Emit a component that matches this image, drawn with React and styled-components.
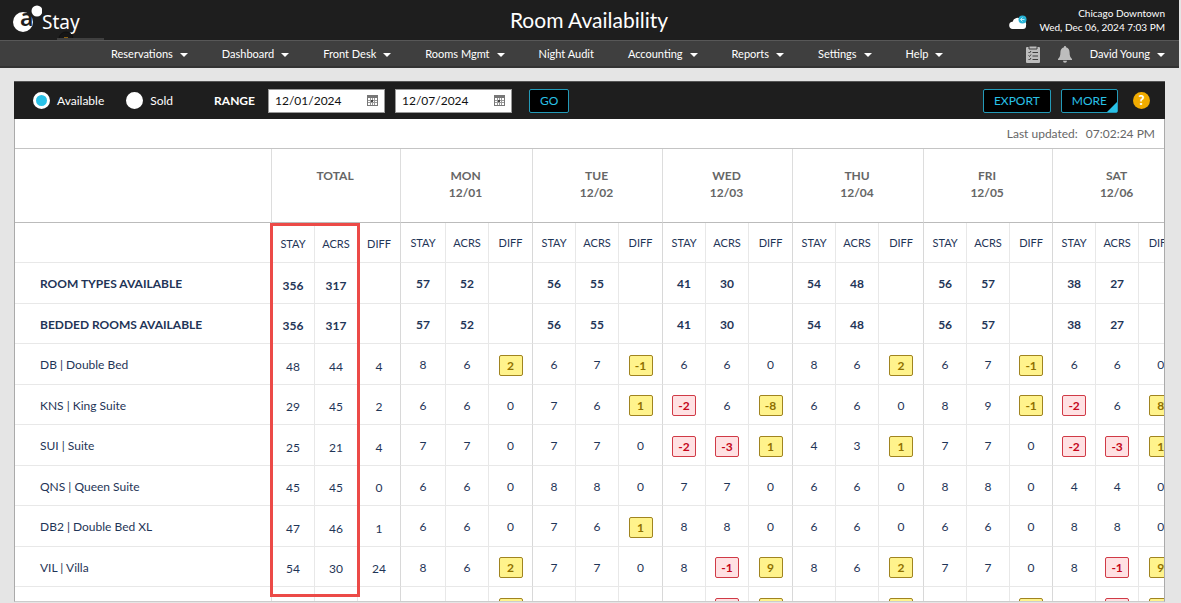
import React from "react";
import styled, { createGlobalStyle, css } from "styled-components";

const Global = createGlobalStyle`
  * { box-sizing: border-box; }
  html, body { margin: 0; background: #e5e5e5; }
  body { font-family: Lato, "Liberation Sans", sans-serif; color: #1f3557; }
  button, input { font-family: inherit; }
`;

const Page = styled.div`
  height: 100vh;
  display: flex;
  flex-direction: column;
  overflow: hidden;
`;

const TopBar = styled.header`
  flex: none;
  display: grid;
  grid-template-columns: 1fr auto 1fr;
  align-items: center;
  height: 40px;
  margin-right: 2px;
  padding: 0 14px 0 13px;
  background: #1e1e1e;
  color: #fff;
`;

const Brand = styled.a`
  position: relative;
  display: flex;
  align-items: center;
  height: 40px;
  color: #fff;
  text-decoration: none;
`;

const BrandName = styled.span`
  font-family: "Noto Sans", "Open Sans", sans-serif;
  font-size: 19px;
  line-height: 24px;
  padding-top: 4px;
`;

const BrandTab = styled.svg`
  position: absolute;
  left: 44px;
  bottom: 0;
`;

const Title = styled.h1`
  margin: 0;
  font-size: 21px;
  line-height: 24px;
  font-weight: 400;
`;

const Property = styled.div`
  display: flex;
  justify-content: flex-end;
  align-items: flex-end;
  gap: 12px;
`;

const WeatherIcon = styled.svg`
  margin-bottom: 4px;
`;

const PropertyText = styled.div`
  font-size: 10px;
  line-height: 14px;
  text-align: right;
`;

const NavBar = styled.nav`
  flex: none;
  display: flex;
  justify-content: space-between;
  align-items: center;
  height: 28px;
  margin-right: 2px;
  padding: 1px 14px 0 111px;
  background: #3f3f3f;
  border-top: 1px solid #585858;
  border-bottom: 2px solid #333;
`;

const NavGroup = styled.div`
  display: flex;
  align-items: center;
  gap: ${(p) => p.$gap}px;
`;

const NavLink = styled.a`
  display: flex;
  align-items: center;
  gap: 7px;
  font-size: 11px;
  line-height: 14px;
  color: #fff;
  text-decoration: none;
`;

const Caret = styled.span`
  margin-top: 2px;
  border: 4px solid transparent;
  border-top-color: #fff;
  border-bottom: 0;
`;

const IconButton = styled.button`
  display: flex;
  padding: 0;
  border: 0;
  background: none;
  cursor: pointer;
`;

const Panel = styled.main`
  flex: 1;
  min-height: 0;
  display: flex;
  flex-direction: column;
  margin: 13px 16px 1px 14px;
  background: #fff;
  border: 1px solid #aaa;
  border-top: 0;
  border-bottom-color: #ccc;
`;

const Toolbar = styled.form`
  flex: none;
  display: flex;
  align-items: center;
  height: 38px;
  margin: 0 -1px;
  padding: 0 15px 0 19px;
  background: #1e1e1e;
  border-top: 1px solid #555;
  color: #fff;
`;

const RadioLabel = styled.label`
  display: flex;
  align-items: center;
  gap: 7px;
  margin-right: 22px;
  font-size: 12px;
  line-height: 16px;
`;

const Radio = styled.input`
  appearance: none;
  width: 17px;
  height: 17px;
  margin: 0;
  border: 3px solid #fff;
  border-radius: 50%;
  background: #fff;
  &:checked { background: #29c1e7; }
`;

const RangeLabel = styled.span`
  margin: 0 13px 0 19px;
  font-size: 12px;
  line-height: 16px;
  font-weight: 700;
`;

const DateBox = styled.span`
  display: flex;
  align-items: center;
  width: 117px;
  height: 24px;
  margin-right: 10px;
  padding: 0 6px;
  background: #fff;
  border: 1px solid #999;
`;

const DateInput = styled.input`
  flex: 1;
  min-width: 0;
  padding: 0;
  border: 0;
  outline: 0;
  background: none;
  font-size: 12px;
  line-height: 16px;
  color: #111;
`;

const ToolButton = styled.button`
  position: relative;
  height: 24px;
  padding: 0 10px;
  background: #000;
  border: 1px solid #239ab8;
  border-radius: 2px;
  color: #29c1e7;
  font-size: 12px;
  line-height: 16px;
  cursor: pointer;
`;

const GoButton = styled(ToolButton)`
  margin-left: 7px;
`;

const Corner = styled.span`
  position: absolute;
  right: 0;
  bottom: 0;
  border: 5px solid #29c1e7;
  border-top-color: transparent;
  border-left-color: transparent;
`;

const Actions = styled.div`
  display: flex;
  align-items: center;
  gap: 10px;
  margin-left: auto;
`;

const Help = styled.button`
  width: 17px;
  height: 17px;
  margin-left: 5px;
  padding: 0;
  border: 0;
  border-radius: 50%;
  background: #f0ab00;
  color: #fff;
  font-size: 13px;
  line-height: 17px;
  font-weight: 900;
  cursor: pointer;
`;

const Updated = styled.div`
  flex: none;
  display: flex;
  justify-content: flex-end;
  gap: 8px;
  padding: 6px 9px;
  font-size: 12px;
  line-height: 17px;
  color: #666;
  border-bottom: 1px solid #c4c4c4;
`;

const Grid = styled.div`
  position: relative;
  flex: 1;
  min-height: 0;
  overflow: hidden;
`;

const Table = styled.table`
  table-layout: fixed;
  width: 1300px;
  border-collapse: separate;
  border-spacing: 0;
`;

const Col = styled.col`
  width: ${(p) => p.$w}px;
`;

const GroupHead = styled.th`
  height: 74px;
  padding: 18px 2px 0 0;
  vertical-align: top;
  font-size: 12px;
  line-height: 17px;
  font-weight: 700;
  color: #666;
  border-right: 1px solid #ddd;
  border-bottom: 1px solid #bbb;
`;

const cell = css`
  border-right: 1px solid ${(p) => (p.$last ? "#d8d8d8" : "#e8e8e8")};
  border-bottom: 1px solid #e8e8e8;
  text-align: center;
  line-height: 16px;
`;

const SubHead = styled.th`
  ${cell}
  height: 40px;
  padding: ${(p) => (p.$low ? 3 : 0)}px 0 0;
  font-size: 11px;
  font-weight: 400;
`;

const Row = styled.tr`
  height: 40px;
  font-size: 12px;
  font-weight: ${(p) => (p.$strong ? 700 : 400)};
  &:nth-child(odd) { height: 41px; }
`;

const RowHead = styled.th`
  padding: 2px 0 0 25px;
  border-right: 1px solid #ddd;
  border-bottom: 1px solid #e8e8e8;
  text-align: left;
  line-height: 16px;
  font-weight: inherit;
`;

const Cell = styled.td`
  ${cell}
  padding: ${(p) => (p.$low ? 5 : 2)}px 0 0;
`;

const Badge = styled.span`
  display: block;
  width: 24px;
  height: 21px;
  margin: 0 auto;
  border: 1px solid ${(p) => (p.$red ? "#d03a46" : "#a08420")};
  border-radius: 2px;
  background: ${(p) => (p.$red ? "#ffe1e3" : "#fff38c")};
  color: ${(p) => (p.$red ? "#c4071b" : "#8f7000")};
  line-height: 19px;
  font-weight: 700;
`;

const Highlight = styled.div`
  position: absolute;
  left: 255px;
  top: 74px;
  width: 90px;
  height: 374px;
  border: 3px solid #ec4a47;
  pointer-events: none;
`;

const MENU = [
  ["Reservations", true], ["Dashboard", true], ["Front Desk", true],
  ["Rooms Mgmt", true], ["Night Audit", false], ["Accounting", true],
  ["Reports", true], ["Settings", true], ["Help", true],
];

const GROUPS = [
  { day: "TOTAL", widths: [43, 43, 43] },
  { day: "MON", date: "12/01", widths: [45, 43, 44] },
  { day: "TUE", date: "12/02", widths: [43, 43, 44] },
  { day: "WED", date: "12/03", widths: [43, 43, 44] },
  { day: "THU", date: "12/04", widths: [43, 43, 45] },
  { day: "FRI", date: "12/05", widths: [43, 43, 43] },
  { day: "SAT", date: "12/06", widths: [43, 43, 44] },
];

const TOTALS = [[356, 317, ""], [57, 52, ""], [56, 55, ""], [41, 30, ""], [54, 48, ""], [56, 57, ""], [38, 27, ""]];

/* A value that ends in "y" or "r" is shown in a yellow or red badge. */
const ROWS = [
  { name: "ROOM TYPES AVAILABLE", strong: true, cells: TOTALS },
  { name: "BEDDED ROOMS AVAILABLE", strong: true, cells: TOTALS },
  { name: "DB | Double Bed", cells: [[48, 44, 4], [8, 6, "2y"], [6, 7, "-1y"], [6, 6, 0], [8, 6, "2y"], [6, 7, "-1y"], [6, 6, 0]] },
  { name: "KNS | King Suite", cells: [[29, 45, 2], [6, 6, 0], [7, 6, "1y"], ["-2r", 6, "-8y"], [6, 6, 0], [8, 9, "-1y"], ["-2r", 6, "8y"]] },
  { name: "SUI | Suite", cells: [[25, 21, 4], [7, 7, 0], [7, 7, 0], ["-2r", "-3r", "1y"], [4, 3, "1y"], [7, 7, 0], ["-2r", "-3r", "1y"]] },
  { name: "QNS | Queen Suite", cells: [[45, 45, 0], [6, 6, 0], [8, 8, 0], [7, 7, 0], [6, 6, 0], [8, 8, 0], [4, 4, 0]] },
  { name: "DB2 | Double Bed XL", cells: [[47, 46, 1], [6, 6, 0], [7, 6, "1y"], [8, 8, 0], [6, 6, 0], [6, 6, 0], [8, 8, 0]] },
  { name: "VIL | Villa", cells: [[54, 30, 24], [8, 6, "2y"], [7, 7, 0], [8, "-1r", "9y"], [8, 6, "2y"], [7, 7, 0], [8, "-1r", "9y"]] },
  { name: "", cells: [["", "", ""], ["", "", "y"], ["", "", ""], ["", "r", "y"], ["", "", "y"], ["", "", "y"], ["", "r", "y"]] },
];

function Value({ v }) {
  const m = /^(-?\d*)([yr])$/.exec(String(v));
  return m ? <Badge $red={m[2] === "r"}>{m[1]}</Badge> : v;
}

function Logo() {
  return (
    <svg width="29" height="30" viewBox="0 0 29 30" aria-hidden="true">
      <circle cx="10" cy="17" r="10" fill="#fff" />
      <circle cx="24" cy="6" r="7" fill="#1e1e1e" />
      <circle cx="24" cy="6" r="5.5" fill="#fff" />
      <text x="7" y="21" fontFamily="Noto Sans, sans-serif" fontSize="23" fontWeight="600" fill="#1e1e1e">a</text>
    </svg>
  );
}

function Weather() {
  return (
    <WeatherIcon width="18" height="15" viewBox="0 0 18 15" aria-hidden="true">
      <path d="M4 14a3.6 3.6 0 0 1-.4-7.2A5.2 5.2 0 0 1 12.500 4.500 4.800 4.800 0 0 1 17 10.500 3.300 3.300 0 0 1 14 14z" fill="#fff" />
      <circle cx="13.500" cy="4.500" r="4" fill="#27b3d6" />
      <path d="M11.500 4.500h4M13.500 2.500l-2 2 2 2" stroke="#b8ecf8" fill="none" />
    </WeatherIcon>
  );
}

function Clipboard() {
  return (
    <svg width="14" height="18" viewBox="0 0 14 18" aria-hidden="true">
      <path d="M1 2h12a1 1 0 0 1 1 1v14a1 1 0 0 1-1 1H1a1 1 0 0 1-1-1V3a1 1 0 0 1 1-1z" fill="#bdbdbd" />
      <path d="M3 1h8v3H3z" fill="#bdbdbd" stroke="#3f3f3f" />
      <path d="M2.500 7l1 1 1.500-2M2.500 10.500l1 1 1.500-2M2.500 14l1 1 1.500-2M6.500 7.500H12M6.500 11H12M6.500 14.500H12" stroke="#3f3f3f" fill="none" />
    </svg>
  );
}

function Bell() {
  return (
    <svg width="14" height="17" viewBox="0 0 14 17" aria-hidden="true">
      <path d="M7 0a1 1 0 0 1 1 1.200C10.600 1.700 11.600 4 11.600 6.500c0 3.500.8 5 2.400 6.500v1H0v-1c1.600-1.500 2.400-3 2.400-6.500C2.400 4 3.400 1.700 6 1.200A1 1 0 0 1 7 0zM5 14.800h4a2 2 0 0 1-4 0z" fill="#bdbdbd" />
    </svg>
  );
}

function Calendar() {
  return (
    <svg width="11" height="11" viewBox="0 0 11 11" aria-hidden="true">
      <path d="M0 0h11v11H0z" fill="#777" />
      <path d="M1 3h9v7H1z" fill="#fff" />
      <path d="M3.500 3v7M5.500 3v7M7.500 3v7M1 5.500h9M1 7.500h9" stroke="#999" />
      <path d="M4 5h2v2H4z" fill="#444" />
    </svg>
  );
}

function DateField({ label, value }) {
  return (
    <DateBox>
      <DateInput aria-label={label} defaultValue={value} />
      <Calendar />
    </DateBox>
  );
}

export default function App() {
  return (
    <Page>
      <Global />
      <TopBar>
        <Brand href="#home">
          <Logo />
          <BrandName>Stay</BrandName>
          <BrandTab width="47" height="9" viewBox="0 0 47 9" aria-hidden="true">
            <circle cx="9" cy="8" r="7" fill="#161616" stroke="#101010" />
            <path d="M7 6.500h4" stroke="#8a6010" />
            <path d="M0 7h47v2H0z" fill="#3f3f3f" />
          </BrandTab>
        </Brand>
        <Title>Room Availability</Title>
        <Property>
          <Weather />
          <PropertyText>
            <div>Chicago Downtown</div>
            <div>Wed, Dec 06, 2024 7:03 PM</div>
          </PropertyText>
        </Property>
      </TopBar>
      <NavBar>
        <NavGroup $gap={34}>
          {MENU.map(([name, menu]) => (
            <NavLink href="#menu" key={name}>{name}{menu && <Caret />}</NavLink>
          ))}
        </NavGroup>
        <NavGroup $gap={18}>
          <IconButton aria-label="Tasks"><Clipboard /></IconButton>
          <IconButton aria-label="Notifications"><Bell /></IconButton>
          <NavLink href="#user">David Young<Caret /></NavLink>
        </NavGroup>
      </NavBar>
      <Panel>
        <Toolbar onSubmit={(e) => e.preventDefault()}>
          <RadioLabel><Radio type="radio" name="mode" defaultChecked />Available</RadioLabel>
          <RadioLabel><Radio type="radio" name="mode" />Sold</RadioLabel>
          <RangeLabel>RANGE</RangeLabel>
          <DateField label="From" value="12/01/2024" />
          <DateField label="To" value="12/07/2024" />
          <GoButton>GO</GoButton>
          <Actions>
            <ToolButton type="button">EXPORT</ToolButton>
            <ToolButton type="button">MORE<Corner /></ToolButton>
            <Help type="button">?</Help>
          </Actions>
        </Toolbar>
        <Updated><span>Last updated:</span><span>07:02:24 PM</span></Updated>
        <Grid>
          <Table>
            <colgroup>
              <Col $w={257} />
              {GROUPS.map((g) => g.widths.map((w, i) => <Col key={g.day + i} $w={w} />))}
              <col />
            </colgroup>
            <thead>
              <tr>
                <GroupHead />
                {GROUPS.map((g) => (
                  <GroupHead key={g.day} colSpan={3} scope="colgroup">
                    {g.day}{g.date && <><br />{g.date}</>}
                  </GroupHead>
                ))}
              </tr>
              <tr>
                <SubHead $last />
                {GROUPS.map((g, gi) => ["STAY", "ACRS", "DIFF"].map((t, i) => (
                  <SubHead key={g.day + t} scope="col" $low={gi === 0} $last={i === 2}>{t}</SubHead>
                )))}
              </tr>
            </thead>
            <tbody>
              {ROWS.map((r) => (
                <Row key={r.name} $strong={r.strong}>
                  <RowHead scope="row">{r.name}</RowHead>
                  {r.cells.map((c, gi) => c.map((v, i) => (
                    <Cell key={gi + "-" + i} $low={gi === 0} $last={i === 2}><Value v={v} /></Cell>
                  )))}
                </Row>
              ))}
            </tbody>
          </Table>
          <Highlight />
        </Grid>
      </Panel>
    </Page>
  );
}
